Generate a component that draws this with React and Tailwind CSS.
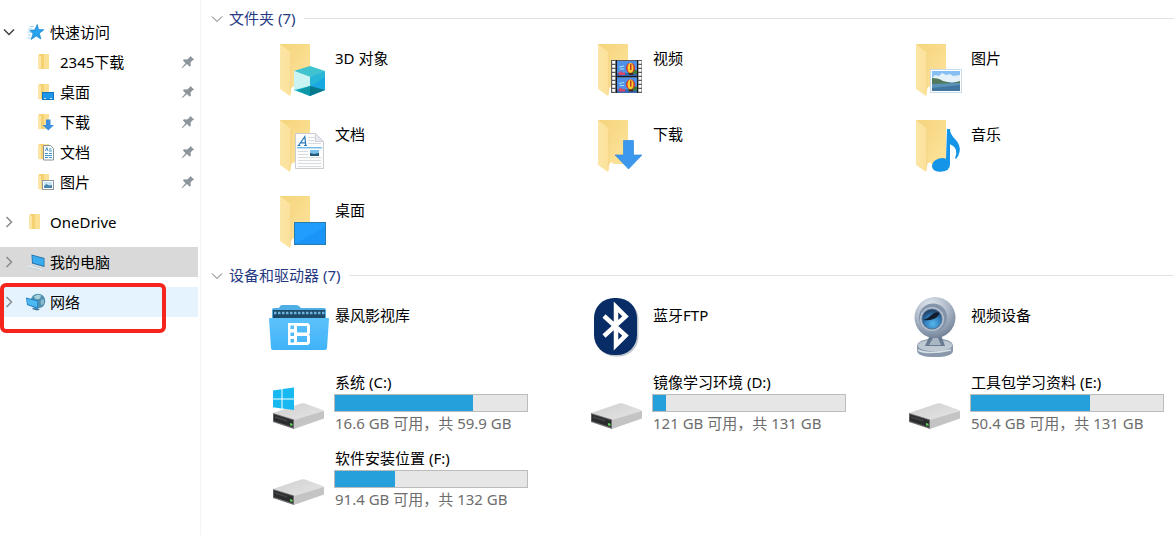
import clsx from 'clsx';

const Chevron = ({ open, className }) => (
    <svg viewBox="0 0 12 12" className={clsx('h-3 w-3 shrink-0', className)} fill="none" stroke="currentColor">
        {open ? <path d="M1 3.5l5 5 5-5" /> : <path d="M3.5 1l5 5-5 5" />}
    </svg>
);

const PinIcon = () => (
    <svg viewBox="0 0 14 14" className="h-3.5 w-3.5 shrink-0" fill="#8c959c">
        <path d="M9.500 1L13.200 4.700l-1.600.6-2 2.200.2 3.500-1.300.6-2.500-2.500L1.500 13l-.7-.6L4.500 8.200 2 5.600l.8-1.300 3.400.2 2.300-2z" />
    </svg>
);

/* ---------- small icons ---------- */

const MiniFolder = ({ children }) => (
    <svg viewBox="0 0 18 18" className="h-[18px] w-[18px] shrink-0">
        <path d="M3 1h10v15H3z" fill="#f5d172" />
        <path d="M8 1h5v15H8z" fill="#fbdf93" />
        <path d="M2 1.500l3 1.500v13.500L2 16z" fill="#fbe6a8" />
        {children}
    </svg>
);

const MiniDesktop = () => (
    <MiniFolder>
        <rect x="6" y="9" width="12" height="8" fill="#1c97ea" />
        <path d="M6.500 9.500h11v7h-11z" fill="none" stroke="#1272bd" />
        <path d="M8 15.500h2M14 15.500h2" stroke="#cde9fc" />
    </MiniFolder>
);

const MiniDownload = () => (
    <MiniFolder>
        <path d="M10 6.500h4.500V12H18l-5.700 5.500L6.500 12H10z" fill="#3c90dc" />
    </MiniFolder>
);

const MiniDocument = () => (
    <MiniFolder>
        <path d="M7.500 2.500h7l3 3v11.500h-10z" fill="#fff" stroke="#84929c" />
        <path d="M9.500 8l1.300-3.500L12 8M13 6h2.500M13 8h3M9 10.500h3M13 10.500h3M9 12.500h7M9 14.500h3M13 14.500h3" fill="none" stroke="#3f94c8" />
    </MiniFolder>
);

const MiniPicture = () => (
    <MiniFolder>
        <rect x="6.500" y="7.500" width="11" height="9" fill="#fff" stroke="#8c989f" />
        <path d="M8 9h8v6H8z" fill="#c3e2f4" />
        <path d="M8 13l2.500-2 2.500 1.500 3-.5v3H8z" fill="#4a83a8" />
    </MiniFolder>
);

const StarIcon = () => (
    <svg viewBox="0 0 18 18" className="h-[18px] w-[18px] shrink-0">
        <path d="M10.200 1.500l1.300 5 5.400.3-4.500 3.400 1.400 5.800-4.500-3-5.200 3.500 2-5.700L2.800 7.500l5.100-.7z" fill="#28a3ee" stroke="#1481cf" strokeWidth=".7" />
        <path d="M2.500 3.500h4M1 6h4M.5 9h4M1 12h3M.5 15h3" stroke="#7cc8f5" strokeWidth=".8" />
    </svg>
);

const ComputerIcon = () => (
    <svg viewBox="0 0 20 18" className="h-[18px] w-5 shrink-0">
        <path d="M5.500 1.500l13 3.500v9l-12.500-3.500z" fill="#1f6ea8" />
        <path d="M6.300 2.500l11.500 3.200v7.100L6.800 9.800z" fill="#3aabec" />
        <path d="M.5 14l5-2 12.500 3.500-4 2z" fill="#e9f1f5" />
        <path d="M2 14l12 3M5.500 12.500L17 15.600" stroke="#a9bac4" strokeWidth=".7" />
    </svg>
);

const NetworkIcon = () => (
    <svg viewBox="0 0 20 18" className="h-[18px] w-5 shrink-0">
        <circle cx="12" cy="8" r="7.300" fill="#4f8fb0" />
        <path d="M8 3.500c3-2 5-2 7-1l-1 3-3 1-2-1z" fill="#a9d1dc" />
        <path d="M15.500 6l2.500 1v3l-2.500 2.500-1-3z" fill="#8bbccd" />
        <path d="M0 4.500l12 3V16L1 12z" fill="#1e80c7" />
        <path d="M1 5.700l10.200 2.600v6L1.700 11.200z" fill="#4fb9f3" />
        <path d="M7 15l5 .5 2 1-3 1-5-1.500z" fill="#3c759a" />
    </svg>
);

/* ---------- large icons ---------- */

const FolderIcon = ({ children }) => (
    <svg viewBox="0 0 64 64" className="h-16 w-16 shrink-0">
        <defs>
            <linearGradient id="folderBack" x1="0" x2="1" y1="0" y2="1">
                <stop offset="0" stopColor="#f5d47c" />
                <stop offset="1" stopColor="#fde39c" />
            </linearGradient>
            <linearGradient id="folderFlap" x1="0" x2="1" y1="0" y2="0">
                <stop offset="0" stopColor="#fce6a6" />
                <stop offset="1" stopColor="#fbe09a" />
            </linearGradient>
        </defs>
        <path d="M14 5h30v44H14z" fill="url(#folderBack)" />
        <path d="M14 5l10 8q1 1 1 2v39l-1 3-10-7z" fill="url(#folderFlap)" />
        <path d="M25 49.500l2-2h2v3h-4z" fill="#fff" />
        <path d="M24.800 15v36" stroke="#eccd7c" strokeWidth=".6" />
        {children}
    </svg>
);

const ObjectsFolder = () => (
    <FolderIcon>
        <path d="M28 32l16-5 15 5-15 6z" fill="#3fc4cf" />
        <path d="M28 32l16 6v19l-16-6z" fill="#a4eceb" />
        <path d="M28 32l16 6v10l-16 3z" fill="#c9f4f3" />
        <path d="M44 38l15-6v19l-15 6z" fill="#18a9e2" />
        <path d="M44 38l15-6v6L44 48z" fill="#27b5d8" />
        <path d="M28 51l16-4v10z" fill="#2cbcca" />
        <path d="M44 47l15 4-15 6z" fill="#08798c" />
        <path d="M31 51.500l13-4.500v10z" fill="#0d97a8" />
    </FolderIcon>
);

const DocumentsFolder = () => (
    <FolderIcon>
        <path d="M29.500 18.500h20l8 8v27h-28z" fill="#fcfcfc" stroke="#c9cdd2" />
        <path d="M49.500 18.500l8 8h-8z" fill="#e5e8ec" stroke="#c3c8cd" strokeWidth=".7" />
        <path d="M32.500 30.500l6.300-8.800 1 8.800M34.700 27.800h4.800M31.500 30.500h3M38 30.500h3" fill="none" stroke="#2678ba" strokeWidth="1.200" />
        <path d="M42 22.500h7M42 25.500h7M42 28.500h13M32 36.500h10M32 39.500h10M32 42.500h23M32 45.500h23M32 48.500h23M32 51.500h23" stroke="#cfd3d7" strokeWidth=".8" />
        <path d="M31 32.800h25" stroke="#3ba1e0" />
        <rect x="44" y="35" width="9" height="6" fill="#78bfe9" />
        <path d="M44 38l4 1 5-1v3h-9z" fill="#23577a" />
    </FolderIcon>
);

const DesktopFolder = () => (
    <FolderIcon>
        <rect x="28" y="31" width="32" height="23" fill="#1a94f6" />
        <path d="M29 53L59 36v-4.500H29z" fill="#209dfd" />
        <path d="M28.500 31.500h31v22h-31z" fill="none" stroke="#287aaf" />
    </FolderIcon>
);

const Balloon = ({ y }) => (
    <g>
        <path d={`M33 ${y}h20v15H33z`} fill="#4f8fe6" />
        <path d={`M33 ${y + 12}h20v3H33z`} fill="#2f62b4" />
        <path d={`M44 ${y + 9}h9v4h-9z`} fill="#3d7a3b" />
        <ellipse cx="46.500" cy={y + 7} rx="4.500" ry="5" fill="#d92c29" />
        <ellipse cx="46.500" cy={y + 7} rx="3" ry="5" fill="#f6cf2c" />
        <path d={`M46 ${y + 3}h1.500v6H46z`} fill="#c4392a" />
        <path d={`M45 ${y + 12}h4v2h-4z`} fill="#552316" />
        <path d={`M35 ${y + 6}l5-1M36 ${y + 8}h4`} stroke="#a4e4ed" />
        <path d={`M34 ${y + 12}l3-2 2 2 2-1v3h-6z`} fill="#d8486b" />
    </g>
);

const VideosFolder = () => (
    <FolderIcon>
        <rect x="27" y="21" width="31" height="33" fill="#5c5c5c" />
        <Balloon y={22} />
        <Balloon y={38.5} />
        <path d="M32.500 21v33M53.500 21v33M33 37.500h20" stroke="#17191b" />
        <path d="M29.700 22v32M56 22v32" stroke="#fff" strokeWidth="3" strokeDasharray="2.800 1.200" />
    </FolderIcon>
);

const DownloadsFolder = () => (
    <FolderIcon>
        <path d="M39.500 25.500h10V40H58L44.500 54 31 40h8.500z" fill="#3b98ec" stroke="#318de0" strokeWidth=".7" />
    </FolderIcon>
);

const PicturesFolder = () => (
    <FolderIcon>
        <rect x="28.500" y="30.500" width="31" height="23" fill="#fff" stroke="#c9dbe8" />
        <rect x="30" y="32" width="28" height="20" fill="#86bff2" />
        <path d="M30 39l3-3 4 1 3-3 4 2 4-1 3 2 7-1v7H30z" fill="#e5f1f8" />
        <path d="M30 39q7 0 11 3l9 2 8-2v4H30z" fill="#51795c" />
        <path d="M30 45l28-1v8H30z" fill="#5b93b8" />
        <path d="M30 49l28-3v6H30z" fill="#3f759f" />
    </FolderIcon>
);

const MusicFolder = () => (
    <FolderIcon>
        <path d="M45 14h3q0 5 5 10 6 6 4.500 13-.7 4-3.500 7l-1-.7q2-4 1-8-1-4-6-6v20q0 7-9 7.500-8 .2-9-5-.3-6 7-8.300 4-1 7 .3z" fill="#1595e8" />
    </FolderIcon>
);

const BaofengIcon = () => (
    <svg viewBox="0 0 64 64" className="h-16 w-16 shrink-0">
        <defs>
            <linearGradient id="baofeng" x1="0" x2="0" y1="0" y2="1">
                <stop offset="0" stopColor="#5cc1fb" />
                <stop offset="1" stopColor="#41b3f9" />
            </linearGradient>
        </defs>
        <path d="M6 14q0-2 2-2h5q1-3 3-3h14q3 0 5 3h23q2 0 2 2v10H6z" fill="#4faee4" />
        <path d="M7 14h52v8H7z" fill="#1c4a68" />
        <path d="M8 17h51" stroke="#6cb6df" strokeWidth="2.500" strokeDasharray="2.500 1.500" />
        <path d="M3 23q0-1 1-1h58q1 0 1 1l-2 29q0 2-2 2H7q-2 0-2-2z" fill="url(#baofeng)" />
        <path fillRule="evenodd" d="M22 27h20l2 2v8l-1 1.500 1 1.500v7l-2 2H22zM31 30v6.500h10V30zM31 40v6h10v-6zM24.500 29.500v3.500h3.500v-3.500zM24.500 36.500V40h3.500v-3.500zM24.500 43v3.500h3.500V43z" fill="#fff" />
    </svg>
);

const BluetoothIcon = () => (
    <svg viewBox="0 0 64 64" className="h-16 w-16 shrink-0">
        <rect x="11.500" y="3.500" width="43" height="57" rx="20" fill="#9aa1ad" opacity=".6" />
        <rect x="10" y="2" width="43" height="57" rx="20" fill="#082d66" />
        <path d="M20 20l21.500 19.500L32 49V11l9.500 9.500L20 40" fill="none" stroke="#fff" strokeWidth="4.500" />
    </svg>
);

const WebcamIcon = () => (
    <svg viewBox="0 0 64 64" className="h-16 w-16 shrink-0">
        <defs>
            <radialGradient id="camBody" cx=".4" cy=".25" r=".75">
                <stop offset="0" stopColor="#e8edf4" />
                <stop offset=".6" stopColor="#a9b5c5" />
                <stop offset="1" stopColor="#74849a" />
            </radialGradient>
            <radialGradient id="camLens" cx=".55" cy=".75" r=".7">
                <stop offset="0" stopColor="#58b8ed" />
                <stop offset=".6" stopColor="#2f7cba" />
                <stop offset="1" stopColor="#23426a" />
            </radialGradient>
        </defs>
        <path d="M15 50q0-5 11-7h15q10 2 10 7v5q-1 6-18 6t-18-6z" fill="#8999ab" />
        <ellipse cx="33" cy="49.500" rx="17" ry="6" fill="#bec9d4" />
        <path d="M28 39h11l4 11H23z" fill="#687b91" />
        <path d="M31 42h5l3 7H27z" fill="#a9b7c5" />
        <path d="M16 54q9 5 33 0" fill="none" stroke="#d9e1e8" strokeWidth="1.500" />
        <circle cx="33" cy="21.500" r="20.500" fill="url(#camBody)" />
        <circle cx="31" cy="21.500" r="14" fill="#8494a9" />
        <circle cx="30" cy="23" r="12" fill="#b4c2d2" />
        <circle cx="30" cy="23" r="10.500" fill="#5b7591" />
        <circle cx="30" cy="23" r="9.500" fill="url(#camLens)" />
        <path d="M21.500 24q4-1 8-5t8-2q-1 4-6 6t-10 1z" fill="#131c2c" />
    </svg>
);

const DriveIcon = ({ system }) => (
    <svg viewBox="0 0 64 64" className="h-16 w-16 shrink-0">
        <defs>
            <linearGradient id="driveTop" x1="0" x2="1" y1="0" y2="1">
                <stop offset="0" stopColor="#cfcfd0" />
                <stop offset="1" stopColor="#e6e6e7" />
            </linearGradient>
        </defs>
        <path d="M7 41l28-9.500q2-.7 4 0L57 38q1 .5 1 1.500l-30 9z" fill="url(#driveTop)" />
        <path d="M28 48l30-9v7.500L28 57z" fill="#c4c4c5" />
        <path d="M7 41l21 6.500V57L7 50z" fill="#6c6d6e" />
        <path d="M7.800 42.300L27 48.300v7L7.800 49z" fill="#2b2c2d" />
        <path d="M9 45l12 3.800" stroke="#454647" strokeWidth="1.500" />
        <path d="M24 51l2.500.8v2.200L24 53.200z" fill="#5fd35c" />
        {system && (
            <path d="M7 18.500l8.500-1.300v9.300H7zM16.500 17L28 15.500v11H16.500zM7 27.500h8.500v9L7 35.300zM16.500 27.500H28V38l-11.500-1.400z" fill="#18b9f1" />
        )}
    </svg>
);

const quickAccess = [
    { name: '2345下载', Icon: MiniFolder },
    { name: '桌面', Icon: MiniDesktop },
    { name: '下载', Icon: MiniDownload },
    { name: '文档', Icon: MiniDocument },
    { name: '图片', Icon: MiniPicture },
];

const folders = [
    { name: '3D 对象', Icon: ObjectsFolder },
    { name: '视频', Icon: VideosFolder },
    { name: '图片', Icon: PicturesFolder },
    { name: '文档', Icon: DocumentsFolder },
    { name: '下载', Icon: DownloadsFolder },
    { name: '音乐', Icon: MusicFolder },
    { name: '桌面', Icon: DesktopFolder },
];

const devices = [
    { name: '暴风影视库', Icon: BaofengIcon },
    { name: '蓝牙FTP', Icon: BluetoothIcon },
    { name: '视频设备', Icon: WebcamIcon },
];

const drives = [
    { name: '系统 (C:)', free: '16.6', total: '59.9', used: 72, system: true },
    { name: '镜像学习环境 (D:)', free: '121', total: '131', used: 7 },
    { name: '工具包学习资料 (E:)', free: '50.4', total: '131', used: 62 },
    { name: '软件安装位置 (F:)', free: '91.4', total: '132', used: 31 },
];

const TreeItem = ({ name, Icon, open, className }) => (
    <button className={clsx('flex h-[30px] w-full items-center pl-[3px] text-left', className)}>
        <Chevron open={open} className={clsx('stroke-[1.5]', open ? 'text-[#404040]' : 'text-[#8a8a8a]')} />
        <span className="ml-2.5 mr-1 flex w-[21px] justify-center">
            <Icon />
        </span>
        {name}
    </button>
);

const Sidebar = () => (
    <nav className="w-[201px] shrink-0 border-r border-[#f3f3f3] pr-0.5 pt-[17px]">
        <TreeItem name="快速访问" Icon={StarIcon} open />
        {quickAccess.map(({ name, Icon }) => (
            <button key={name} className="flex h-[30px] w-full items-center gap-1.5 pl-9 pr-[3px] text-left">
                <Icon />
                <span className="flex-1">{name}</span>
                <PinIcon />
            </button>
        ))}
        <div className="mt-2.5 flex flex-col gap-2.5">
            <TreeItem name="OneDrive" Icon={MiniFolder} />
            <TreeItem name="我的电脑" Icon={ComputerIcon} className="bg-[#d9d9d9]" />
            <div className="relative">
                <TreeItem name="网络" Icon={NetworkIcon} className="bg-[#e5f3ff]" />
                <div className="pointer-events-none absolute -top-1 left-0 h-[50px] w-[166px] rounded-md border-4 border-[#f5251d]" />
            </div>
        </div>
    </nav>
);

const GroupHeader = ({ title, count }) => (
    <button className="flex h-[29px] w-full items-center pl-2.5 text-left text-[#253a83]">
        <Chevron open className="text-[#6b6b6b]" />
        <span className="ml-1.5 pb-0.5">{title} ({count})</span>
        <span className="ml-2 h-px flex-1 bg-[#e2e2e2]" />
    </button>
);

const Tiles = ({ children }) => (
    <div className="grid grid-cols-[repeat(auto-fill,262px)] gap-x-14 pl-[65px]">{children}</div>
);

const FolderTile = ({ name, Icon }) => (
    <button className="flex h-[76px] gap-[5px] py-1.5 text-left">
        <Icon />
        <span className="pt-[9px] leading-5">{name}</span>
    </button>
);

const DriveTile = ({ name, free, total, used, system }) => (
    <button className="flex h-[76px] gap-1 py-1.5 text-left">
        <DriveIcon system={system} />
        <span className="flex flex-1 flex-col gap-0.5">
            <span className="pl-px leading-5">{name}</span>
            <span className="h-[18px] border border-[#bcbcbc] bg-[#e6e6e6]">
                <span className="block h-full bg-[#26a0da]" style={{ width: `${used}%` }} />
            </span>
            <span className="whitespace-nowrap pl-px leading-[18px] text-[#6d6d6d]">
                {free} GB 可用，共 {total} GB
            </span>
        </span>
    </button>
);

export default function App() {
    return (
        <div className="flex min-h-screen bg-white font-['Noto_Sans','Noto_Sans_CJK_SC',sans-serif] text-[15px] leading-5 text-black">
            <Sidebar />
            <main className="min-w-0 flex-1 pt-1">
                <GroupHeader title="文件夹" count={7} />
                <Tiles>
                    {folders.map((folder) => (
                        <FolderTile key={folder.name} {...folder} />
                    ))}
                </Tiles>
                <GroupHeader title="设备和驱动器" count={7} />
                <Tiles>
                    {devices.map((device) => (
                        <FolderTile key={device.name} {...device} />
                    ))}
                    {drives.map((drive) => (
                        <DriveTile key={drive.name} {...drive} />
                    ))}
                </Tiles>
            </main>
        </div>
    );
}
